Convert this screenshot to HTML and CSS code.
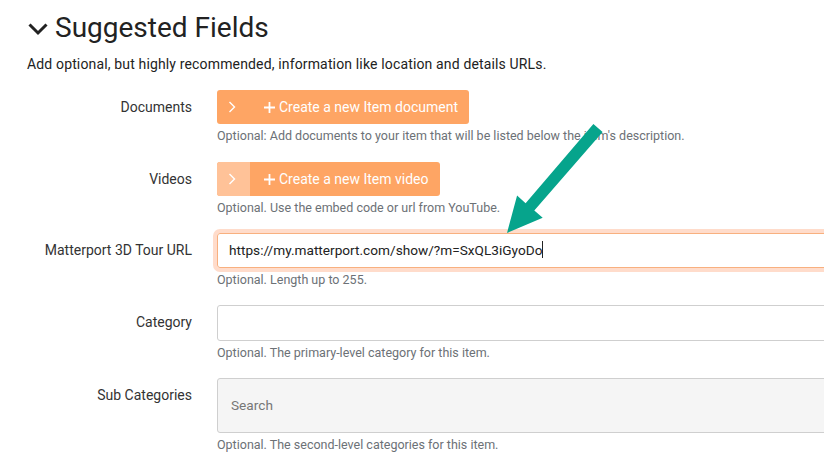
FILE: index.html
```html
<!DOCTYPE html>
<html>

<head>
    <title>Suggested Fields</title>
    <meta charset="UTF-8">
    <link rel="stylesheet" href="styles.css">
</head>

<body>
    <div class="secao">
        <h2 class="titulo">
            <svg class="seta-titulo" width="20" height="14" viewBox="0 0 20 14">
                <path d="M1.5 2.5 L10 11 L18.5 2.5" fill="none" stroke="#222" stroke-width="3" />
            </svg>
            Suggested Fields
        </h2>
        <p class="descricao">Add optional, but highly recommended, information like location and details URLs.</p>

        <div class="linha primeira">
            <label class="rotulo">Documents</label>
            <div class="campo">
                <div class="botao">
                    <span class="botao-lado">
                        <svg width="8" height="12" viewBox="0 0 8 12"><path d="M1.5 1 L6.5 6 L1.5 11" fill="none" stroke="#fff" stroke-width="1.4" /></svg>
                    </span>
                    <span class="botao-texto">
                        <svg class="mais" width="11" height="11" viewBox="0 0 11 11"><path d="M5.5 0 V11 M0 5.5 H11" stroke="#fff" stroke-width="1.8" /></svg>
                        Create a new Item document
                    </span>
                </div>
                <small class="ajuda">Optional: Add documents to your item that will be listed below the item's description.</small>
            </div>
        </div>

        <div class="linha">
            <label class="rotulo">Videos</label>
            <div class="campo">
                <div class="botao">
                    <span class="botao-lado claro">
                        <svg width="8" height="12" viewBox="0 0 8 12"><path d="M1.5 1 L6.5 6 L1.5 11" fill="none" stroke="#fff" stroke-width="1.4" /></svg>
                    </span>
                    <span class="botao-texto">
                        <svg class="mais" width="11" height="11" viewBox="0 0 11 11"><path d="M5.5 0 V11 M0 5.5 H11" stroke="#fff" stroke-width="1.8" /></svg>
                        Create a new Item video
                    </span>
                </div>
                <small class="ajuda">Optional. Use the embed code or url from YouTube.</small>
            </div>
        </div>

        <div class="linha">
            <label class="rotulo">Matterport 3D Tour URL</label>
            <div class="campo">
                <div class="entrada foco">https://my.matterport.com/show/?m=SxQL3iGyoDo<span class="cursor"></span></div>
                <small class="ajuda">Optional. Length up to 255.</small>
            </div>
        </div>

        <div class="linha">
            <label class="rotulo">Category</label>
            <div class="campo">
                <div class="entrada alta"></div>
                <small class="ajuda">Optional. The primary-level category for this item.</small>
            </div>
        </div>

        <div class="linha">
            <label class="rotulo">Sub Categories</label>
            <div class="campo">
                <div class="entrada busca">Search</div>
                <small class="ajuda">Optional. The second-level categories for this item.</small>
            </div>
        </div>
    </div>

    <svg class="flecha" width="824" height="460" viewBox="0 0 824 460">
        <polygon fill="#06a48c" points="602.6,132 593.4,124 525.6,203.2 517.1,195.5 507,233 542.7,217.7 534.3,210.4" />
    </svg>
</body>

</html>
```

FILE: styles.css
```css
* {
    margin: 0;
    padding: 0;
    box-sizing: border-box;
}

body {
    font-family: Roboto, "Liberation Sans", Arial, sans-serif;
    color: #222;
    background: #fff;
    overflow: hidden;
    width: 824px;
    height: 460px;
}

.secao {
    padding: 10px 0 0 28px;
}

.titulo {
    display: flex;
    align-items: center;
    gap: 7px;
    font-size: 28px;
    font-weight: 400;
    line-height: 36px;
    color: #222;
}

.seta-titulo {
    margin-top: 1px;
}

.descricao {
    font-size: 14px;
    letter-spacing: 0.15px;
    line-height: 20px;
    margin-top: 8px;
    margin-left: -1px;
    margin-bottom: 16px;
}

.linha {
    display: flex;
    margin-bottom: 16px;
}

.primeira {
    margin-bottom: 17px;
}

.rotulo {
    width: 164px;
    flex-shrink: 0;
    text-align: right;
    font-size: 14px;
    line-height: 34px;
    color: #333;
    margin-right: 25px;
}

.campo {
    width: 640px;
    flex-shrink: 0;
}

.botao {
    display: inline-flex;
    height: 34px;
    background: #fea564;
    border-radius: 3px;
    overflow: hidden;
    color: #fff;
    font-size: 14px;
}

.botao-lado {
    width: 33px;
    display: flex;
    align-items: center;
    justify-content: center;
    padding-right: 4px;
}

.claro {
    background: #ffc298;
}

.botao-texto {
    display: flex;
    align-items: center;
    gap: 4px;
    padding: 0 11px 0 14px;
}

.ajuda {
    display: block;
    font-size: 12.5px;
    line-height: 18px;
    margin-top: 3px;
    color: #6c7176;
}

.entrada {
    height: 35px;
    border: 1px solid #cfcfcf;
    border-radius: 3px;
    font-size: 13.65px;
    line-height: 33px;
    padding-left: 11px;
    color: #222;
}

.foco {
    border-color: #f8b07f;
    box-shadow: 0 0 0 4px #ffdccb;
}

.cursor {
    display: inline-block;
    width: 1px;
    height: 17px;
    background: #222;
    vertical-align: -3px;
}

.alta {
    height: 36px;
}

.busca {
    height: 55px;
    line-height: 53px;
    background: #f5f5f5;
    padding-left: 13px;
    color: #777;
}

.flecha {
    position: absolute;
    left: 0;
    top: 0;
    pointer-events: none;
}
```
